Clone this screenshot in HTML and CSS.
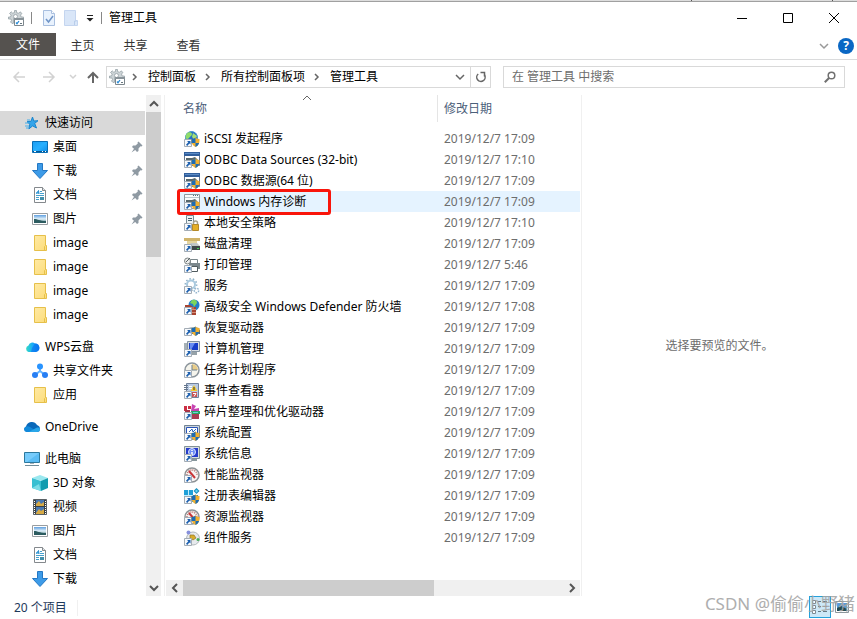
FILE: index.html
```html
<!DOCTYPE html>
<html lang="zh-CN">
<head>
<meta charset="utf-8">
<title>管理工具</title>
<link rel="stylesheet" href="styles.css">
</head>
<body>
<svg class="defs" aria-hidden="true">
  <linearGradient id="g-blue" x1="0" y1="0" x2="1" y2="1"><stop offset="0" stop-color="#1b9df2"/><stop offset=".5" stop-color="#28b0ff"/><stop offset="1" stop-color="#0c8be8"/></linearGradient>
  <linearGradient id="g-sky" x1="0" y1="0" x2="0" y2="1"><stop offset="0" stop-color="#5f9fe0"/><stop offset=".5" stop-color="#e3f2fa"/><stop offset="1" stop-color="#356a70"/></linearGradient>
  <linearGradient id="g-wps" x1="0" y1="0" x2="1" y2="0"><stop offset="0" stop-color="#35dcc4"/><stop offset=".5" stop-color="#19a9f8"/><stop offset="1" stop-color="#0877f2"/></linearGradient>
  <linearGradient id="g-fold" x1="0" y1="0" x2="1" y2="1"><stop offset="0" stop-color="#ffeaa4"/><stop offset="1" stop-color="#fcdc7a"/></linearGradient>
  <symbol id="gear" viewBox="0 0 16 16">
    <path d="M6.500.5h2v2l2 .8L12 1.800 14 3.500 12.500 5l.7 2h2.300v1.500H5.500v4.800L4 13.500 2.500 12l1-1.500L3 9H.5V7h2l.7-2L1.500 3.500 3.200 1.800 4.700 3.200l1.800-.7z" fill="#ccd3d6" stroke="#98a3a8" stroke-width=".8"/>
    <circle cx="7.500" cy="6.500" r="2" fill="#fff" stroke="#a4adb2"/>
    <path d="M6.500 8.500h9v7h-9z" fill="#fff" stroke="#7d878d"/><path d="M6 8h10v2H6z" fill="#899399"/>
    <path d="M8 12.500l1 1.200 2-2.700" fill="none" stroke="#2388d5" stroke-width="1.200"/><path d="M12 13.500h2" stroke="#68777f"/>
  </symbol>
  <symbol id="arrow" viewBox="0 0 16 16"><path d="M.5 8.500h7v7h-7z" fill="#f7f9fb" stroke="#a3acb5"/><path d="M3 10h3.500v3.500L5.400 12.400 3.200 15 2 13.800l2.300-2.500z" fill="#1c5fae"/></symbol>
  <symbol id="shield" viewBox="0 0 16 16"><path d="M7.500 8q2.500 0 4-1.500Q13 8 15.500 8q.5 6-4 8-4.500-2-4-8z" fill="#f0b030"/><path d="M11.500 6.500Q10 8 7.500 8v4h4zM11.500 12h3.600c-.6 2-1.800 3.200-3.600 4z" fill="#1c6cb5"/></symbol>
  <symbol id="star" viewBox="0 0 16 16"><path d="M8.500 2l1.300 4 4.200-.3-3.300 2.700 1.800 4.600-3.900-2.100-3.700 3 .9-4.700L3 6.700l4-.4z" fill="#36a5ea" stroke="#1a86cd"/><path d="M3 5h3M1 8h4M1 11h4M2 13h3" stroke="#48aee9"/></symbol>
  <symbol id="desktop" viewBox="0 0 16 16"><path d="M.5 2.500h15v11H.5z" fill="url(#g-blue)" stroke="#086fb7"/><path d="M1 12.500h14" stroke="#075792"/><path d="M2 12.500h2M10 12.500h1M13 12.500h1" stroke="#fff"/></symbol>
  <symbol id="down" viewBox="0 0 16 16"><path d="M5.500.5h5v7h5L8 15.500.5 7.500h5z" fill="#3d9be8" stroke="#2478c4"/></symbol>
  <symbol id="doc" viewBox="0 0 16 16"><path d="M2.500.5h8l3 3v12h-11z" fill="#fff" stroke="#84898d"/><path d="M10.500.5v3h3" fill="#e1e5e8" stroke="#84898d"/><path d="M8 4.500h2M8 6.500h4M4 8.500h8M4 10.500h3M4 12.500h3" stroke="#45a0cd"/><path d="M4.500 6.500l2-3 .5 3.500M4 6h3" stroke="#1587cd" fill="none"/><path d="M8 10h4v3H8z" fill="#438fab"/></symbol>
  <symbol id="pic" viewBox="0 0 16 16"><path d="M.5 2.500h15v11H.5z" fill="#fff" stroke="#989da1"/><path d="M2 4h12v8H2z" fill="url(#g-sky)"/><path d="M2 8c4 0 5 2 12 2v2H2z" fill="#2c5c60"/></symbol>
  <symbol id="folder" viewBox="0 0 16 16"><path d="M2.500.5h11v10h1v5h-12z" fill="url(#g-fold)" stroke="#e6c04a"/><path d="M12.500 15.500v-4l1-1" fill="none" stroke="#e6c04a"/></symbol>
  <symbol id="wps" viewBox="0 0 16 16"><path d="M4.500 13a3.400 3.400 0 0 1 0-6.500 4 4 0 0 1 6.500-2 4.300 4.300 0 0 1 1 8.500z" fill="url(#g-wps)"/><path d="M8 9l3-4.500a4.300 4.300 0 0 1 1 8.500H7z" fill="#0871ef" opacity=".6"/></symbol>
  <symbol id="share" viewBox="0 0 16 16"><path d="M8 4v5M8 8l-5 4M8 8l5 4" stroke="#62b2ff" stroke-width="2"/><circle cx="8" cy="3.500" r="3" fill="#2994ff"/><circle cx="3" cy="12" r="3" fill="#277ff4"/><circle cx="13" cy="12" r="3" fill="#277ff4"/></symbol>
  <symbol id="onedrive" viewBox="0 0 16 16"><path d="M3 13a3 3 0 0 1-1-5.500A6 6 0 0 1 13 6q3 1 3 4t-3 3z" fill="#0a69ba"/><path d="M3 13q-3 0-3-3c0-2 3-4 6-2l8 5z" fill="#1289da"/><path d="M5 13l7-4c3-1 4 0 4 1.500S15 13 13 13z" fill="#29a7e9"/></symbol>
  <symbol id="pc" viewBox="0 0 16 16"><path d="M.5 1.500h15v10H.5z" fill="#5bbcf4" stroke="#2c789d"/><path d="M1 2h14L3 11H1z" fill="#89d5ff" opacity=".6"/><path d="M6 12h4v1H6z" fill="#a7b2b8"/><path d="M1 14.500h14" stroke="#718c99"/></symbol>
  <symbol id="cube" viewBox="0 0 16 16"><path d="M0 3l8-3 8 3-6 3z" fill="#9be8ef"/><path d="M0 3l9 3v10l-9-3z" fill="#38bfd1"/><path d="M9 6l7-3v10l-7 3z" fill="#139caf"/><path d="M0 13l7-4 2 7z" fill="#7bdce6"/></symbol>
  <symbol id="film" viewBox="0 0 16 16"><path d="M1.500.5h13v15h-13z" fill="#3b4144" stroke="#596064"/><path d="M4 1h8v6H4zM4 8h8v7H4z" fill="#4978b2"/><path d="M4 5l3-3 2 3 3-2v4H4zM4 14l3-4 2 2 3-2v5H4z" fill="#d7aa45"/><path d="M2.500 2v13M13.500 2v13" stroke="#fff" stroke-dasharray="1 1"/></symbol>
  <symbol id="pin" viewBox="0 0 12 12"><path d="M7.500.5l4 4-1 1-1-.3-2 2.300v2.500L6 11 4.200 9 .5 11.500 3 7.800 1 6l1-1.500h2.500l2.300-2-.3-1z" fill="#8f9aa3"/></symbol>
  <symbol id="iscsi" viewBox="0 0 16 16"><circle cx="7.500" cy="6.500" r="6" fill="#2470c4" stroke="#3f8fcc"/><path d="M4 1.500c4-1 5 2 3 3.500S5 8 3 8 1 3 4 1.500z" fill="#8fdc6b"/><path d="M9 2l4 3-2 4-3-3z" fill="#a5df75"/><use href="#arrow"/><use href="#shield"/></symbol>
  <symbol id="odbc" viewBox="0 0 16 16"><path d="M.5.500h15v13H.5z" fill="#fff" stroke="#65758b"/><path d="M0 0h16v4H0z" fill="#315f9c"/><path d="M1 1h14v1H1z" fill="#5c8cc6"/><path d="M2 6h6l3-1 4 4-2 2-4-3-3 1-4-1z" fill="#56676c"/><use href="#arrow"/><use href="#shield"/></symbol>
  <symbol id="memory" viewBox="0 0 16 16"><path d="M.5.500h15v14H.5z" fill="#f8fafb" stroke="#8b979e"/><path d="M1 3.500h14" stroke="#b7c5cd"/><path d="M9 1.500h5" stroke="#52717f" stroke-dasharray="1 1"/><path d="M2 6h6l3-1 4 4-2 2-4-3-3 1-4-1z" fill="#56676c"/><use href="#arrow"/><use href="#shield"/></symbol>
  <symbol id="policy" viewBox="0 0 16 16"><path d="M2.500.5h7v13h-7z" fill="#eef3f5" stroke="#778c96"/><path d="M4 3.500h4M4 5.500h4" stroke="#46646f"/><path d="M9.500 10V8a2 2 0 0 1 4 0v2" fill="none" stroke="#a6a18b" stroke-width="1.500"/><path d="M8.500 9.500h6v6h-6z" fill="#e4ae27" stroke="#b48a2b"/><use href="#arrow"/></symbol>
  <symbol id="disk" viewBox="0 0 16 16"><path d="M0 2h16v3H0z" fill="#d0b46b"/><path d="M3 5h10v3H3z" fill="#e5d49e"/><path d="M5 9l2-2h6l3 3v4H5z" fill="#c1c6c6"/><path d="M6 10h10v4H6z" fill="#3f4849"/><path d="M13 12.500h2" stroke="#46d554"/><use href="#arrow"/></symbol>
  <symbol id="print" viewBox="0 0 16 16"><path d="M6.500 2.500h7v4h-7z" fill="#fff" stroke="#7a878b"/><path d="M5 6h11v6H5z" fill="#7b878c"/><path d="M7.500 9.500h6v5h-6z" fill="#fff" stroke="#505b5e"/><circle cx="3.500" cy="4" r="3" fill="#ededeb" stroke="#7d8484"/><path d="M2 5l4-4" stroke="#596466"/><use href="#arrow"/></symbol>
  <symbol id="service" viewBox="0 0 16 16"><circle cx="7" cy="6.500" r="4" fill="none" stroke="#a9c9de" stroke-width="2"/><circle cx="7" cy="6.500" r="5.700" fill="none" stroke="#8fb2c9" stroke-width="1.500" stroke-dasharray="1.500 2"/><circle cx="12.500" cy="12.500" r="2.200" fill="none" stroke="#94b5ce" stroke-width="1.500" stroke-dasharray="1.500 1"/><use href="#arrow"/></symbol>
  <symbol id="firewall" viewBox="0 0 16 16"><circle cx="10" cy="6" r="5.500" fill="#247cc9"/><path d="M8 1q5-1 5 3l-3 4-1-3-3-1z" fill="#7cd45c"/><path d="M1 6h5l3 2h3v8H6V9L1 8z" fill="#a74532"/><path d="M6 10.500h6M6 13.500h6M9 8v3" stroke="#d68d77"/><use href="#arrow"/></symbol>
  <symbol id="recovery" viewBox="0 0 16 16"><path d="M4 8l3-1h6l3 2v5H4z" fill="#b7c4cb"/><path d="M5 10h11v4H5z" fill="#536674"/><use href="#arrow"/><use href="#shield"/></symbol>
  <symbol id="computer" viewBox="0 0 16 16"><path d="M0 2h4v9H0z" fill="#a6b1b7"/><path d="M3.500.5h12v10h-12z" fill="#d9dfe4" stroke="#8594a2"/><path d="M5 2h9v7H5z" fill="#183ec9"/><path d="M6 2h5L7 9H6z" fill="#688df1"/><path d="M8 11h5v3H8z" fill="#96a2a8"/><use href="#arrow"/></symbol>
  <symbol id="clock" viewBox="0 0 16 16"><circle cx="8" cy="8" r="7" fill="#f5f4ec" stroke="#8c959c" stroke-width="1.500"/><path d="M8 2a6 6 0 0 1 6 6H8z" fill="#e8cc88"/><path d="M8 3v5h5" fill="none" stroke="#6e8190"/><use href="#arrow"/></symbol>
  <symbol id="event" viewBox="0 0 16 16"><path d="M2.500.5h12v14h-12z" fill="#b9cbe4" stroke="#71829c"/><path d="M0 2.500h4M0 4.500h4M0 6.500h4" stroke="#64758b"/><path d="M5 3.500h3M5 5.500h3" stroke="#fff"/><path d="M10 2l3.500 6h-7z" fill="#f4ca32"/><path d="M10 4v3" stroke="#333"/><path d="M8 9h5v5H8z" fill="#c95354"/><path d="M9 10.500h3l-2 3" stroke="#fff" fill="none"/><use href="#arrow"/></symbol>
  <symbol id="defrag" viewBox="0 0 16 16"><path d="M0 2h3v5H0zM4 2h3v3H4z" fill="#cb3044"/><path d="M8 0l4 2-2 3 5-1v3H7z" fill="#c743b2"/><path d="M7 7h9v3H7z" fill="#2aa765"/><path d="M7 10h8v5H7z" fill="#a93b52"/><path d="M9 8.500h5" stroke="#66d3dd"/><path d="M1 6h5v2H1z" fill="#a93546"/><use href="#arrow"/></symbol>
  <symbol id="config" viewBox="0 0 16 16"><path d="M.5.500h15v12H.5z" fill="#cdd5dc" stroke="#718394"/><path d="M2.500 2.500h11v8h-11z" fill="#fff" stroke="#2853b8"/><path d="M5 7l3-3 1 3 3-3" fill="none" stroke="#2767bc"/><path d="M8 13h4v2H8z" fill="#87969c"/><use href="#arrow"/><use href="#shield"/></symbol>
  <symbol id="info" viewBox="0 0 16 16"><path d="M.5.500h15v12H.5z" fill="#d8dedf" stroke="#829297"/><path d="M2 2h12v9H2z" fill="#253bcb"/><circle cx="8" cy="6" r="3.500" fill="#6c8cf5" stroke="#dce6ff"/><path d="M8 4v1M8 6v3" stroke="#fff" stroke-width="1.500"/><path d="M8 13h5v2H8z" fill="#87969c"/><use href="#arrow"/></symbol>
  <symbol id="gauge" viewBox="0 0 16 16"><circle cx="8" cy="8" r="7" fill="#f7f3f2" stroke="#8d9295" stroke-width="1.500"/><path d="M3 8a5 5 0 0 1 10 0" fill="none" stroke="#b67671" stroke-width="1.500" stroke-dasharray="1 1"/><path d="M5 4l6 7" stroke="#c83538" stroke-width="2"/><use href="#arrow"/></symbol>
  <symbol id="resource" viewBox="0 0 16 16"><use href="#gauge"/><use href="#shield"/></symbol>
  <symbol id="registry" viewBox="0 0 16 16"><path d="M0 2h9v12H0z" fill="#1fa0d8"/><path d="M4.500 2v10M0 7.500h10" stroke="#c2efff"/><path d="M9 7h5v5H9z" fill="#1789bd"/><path d="M12.500 0L15.500 3 12.500 6 9.500 3z" fill="#178fbf"/><path d="M12.500 1.500L14 3 12.500 4.500 11 3z" fill="#67d5f6"/><use href="#arrow"/><use href="#shield"/></symbol>
  <symbol id="component" viewBox="0 0 16 16"><ellipse cx="9" cy="8.500" rx="6.500" ry="6.500" fill="#e7eaed" stroke="#b0b7bb"/><circle cx="4.500" cy="2.500" r="2" fill="#8790dc"/><path d="M6 5h4l2 3-3 2-3-2z" fill="#d7ad2c" stroke="#94762c" stroke-width=".7"/><circle cx="14" cy="9.500" r="1.500" fill="#45ac59"/><use href="#arrow"/></symbol>
  <symbol id="chev" viewBox="0 0 10 10"><path d="M3 2l3 3-3 3" fill="none" stroke="currentColor" stroke-width="1.500"/></symbol>
  <symbol id="chev-down" viewBox="0 0 10 10"><path d="M1 3l4 4 4-4" fill="none" stroke="currentColor" stroke-width="1.500"/></symbol>
</svg>

<div class="backdrop"><i></i><i></i></div>
<header class="titlebar">
  <svg class="ico"><use href="#gear"/></svg><i class="sep"></i>
  <button class="quick" aria-label="属性"><svg viewBox="0 0 14 16"><path d="M1.500.5h8l3 3v12h-11z" fill="#e9f2fd" stroke="#a9bfdf"/><path d="M9.500.5v3h3" fill="#fff" stroke="#a9bfdf"/><path d="M4 9l2.500 3L11 6" fill="none" stroke="#6f94c7" stroke-width="1.500"/></svg></button>
  <button class="quick" aria-label="新建文件夹"><svg viewBox="0 0 14 16"><path d="M.5.500h11v10h2v5H.5z" fill="#d9e6f8" stroke="#c4d5ef"/><path d="M10.500 15v-4h2" fill="none" stroke="#b8cdea"/></svg></button>
  <button class="custom" aria-label="自定义快速访问工具栏"><svg viewBox="0 0 8 8"><path d="M1 1.500h6" stroke="#222"/><path d="M.5 4h7L4 7.500z" fill="#222"/></svg></button>
  <i class="sep"></i><h1>管理工具</h1>
  <div class="window-controls">
    <button aria-label="最小化"><svg viewBox="0 0 12 12"><path d="M1 6.500h10" stroke="#000"/></svg></button>
    <button aria-label="最大化"><svg viewBox="0 0 12 12"><path d="M1.500 1.500h9v9h-9z" fill="none" stroke="#000"/></svg></button>
    <button aria-label="关闭"><svg viewBox="0 0 12 12"><path d="M1 1l10 10M11 1L1 11" stroke="#000"/></svg></button>
  </div>
</header>
<nav class="ribbon">
  <button class="file-tab">文件</button><button>主页</button><button>共享</button><button>查看</button>
  <div class="ribbon-end"><button aria-label="展开功能区"><svg class="small"><use href="#chev-down"/></svg></button><button class="help" aria-label="帮助">?</button></div>
</nav>
<div class="toolbar">
  <div class="history">
    <button class="faint" aria-label="后退"><svg viewBox="0 0 14 12"><path d="M13 6H2M7 1L2 6l5 5" fill="none" stroke="currentColor" stroke-width="1.500"/></svg></button>
    <button class="faint" aria-label="前进"><svg viewBox="0 0 14 12"><path d="M1 6h11M7 1l5 5-5 5" fill="none" stroke="currentColor" stroke-width="1.500"/></svg></button>
    <button class="recent faint" aria-label="最近位置"><svg viewBox="0 0 10 10"><path d="M2 3l3 3 3-3" fill="none" stroke="currentColor" stroke-width="1.500"/></svg></button>
    <button class="up" aria-label="上移"><svg viewBox="0 0 12 12"><path d="M6 12V2M1 7l5-5 5 5" fill="none" stroke="currentColor" stroke-width="2"/></svg></button>
  </div>
  <div class="address">
    <svg class="ico"><use href="#gear"/></svg><svg class="small"><use href="#chev"/></svg><a href="#panel">控制面板</a>
    <svg class="small"><use href="#chev"/></svg><a href="#items">所有控制面板项</a><svg class="small"><use href="#chev"/></svg><a href="#tools">管理工具</a>
    <button class="dropdown" aria-label="以前的位置"><svg class="small"><use href="#chev-down"/></svg></button>
    <button class="refresh" aria-label="刷新"><svg viewBox="0 0 12 12"><path d="M3.200 3A4.200 4.200 0 1 0 9.500 4" fill="none" stroke="currentColor" stroke-width="1.500"/><path d="M5.500 1.500H9.500v4" fill="none" stroke="currentColor" stroke-width="1.500"/></svg></button>
  </div>
  <label class="search"><input type="text" aria-label="搜索" placeholder="在 管理工具 中搜索"><svg viewBox="0 0 12 12"><circle cx="7.500" cy="4.500" r="3.300" fill="none" stroke="#707070" stroke-width="1.500"/><path d="M5 7L.8 11.200" stroke="#707070" stroke-width="2"/></svg></label>
</div>
<main>
  <aside class="sidebar">
    <ul class="tree">
      <li class="top selected"><svg class="ico"><use href="#star"/></svg><a href="#quick">快速访问</a></li>
      <li><svg class="ico"><use href="#desktop"/></svg><a href="#desk">桌面</a><svg class="pin"><use href="#pin"/></svg></li>
      <li><svg class="ico"><use href="#down"/></svg><a href="#downloads">下载</a><svg class="pin"><use href="#pin"/></svg></li>
      <li><svg class="ico"><use href="#doc"/></svg><a href="#docs">文档</a><svg class="pin"><use href="#pin"/></svg></li>
      <li><svg class="ico"><use href="#pic"/></svg><a href="#pics">图片</a><svg class="pin"><use href="#pin"/></svg></li>
      <li><svg class="ico"><use href="#folder"/></svg><a href="#image1">image</a></li>
      <li><svg class="ico"><use href="#folder"/></svg><a href="#image2">image</a></li>
      <li><svg class="ico"><use href="#folder"/></svg><a href="#image3">image</a></li>
      <li><svg class="ico"><use href="#folder"/></svg><a href="#image4">image</a></li>
      <li class="top group"><svg class="ico"><use href="#wps"/></svg><a href="#cloud">WPS云盘</a></li>
      <li><svg class="ico"><use href="#share"/></svg><a href="#shared">共享文件夹</a></li>
      <li><svg class="ico"><use href="#folder"/></svg><a href="#apps">应用</a></li>
      <li class="top group"><svg class="ico"><use href="#onedrive"/></svg><a href="#drive">OneDrive</a></li>
      <li class="top group"><svg class="ico"><use href="#pc"/></svg><a href="#thispc">此电脑</a></li>
      <li><svg class="ico"><use href="#cube"/></svg><a href="#objects">3D 对象</a></li>
      <li><svg class="ico"><use href="#film"/></svg><a href="#videos">视频</a></li>
      <li><svg class="ico"><use href="#pic"/></svg><a href="#pictures">图片</a></li>
      <li><svg class="ico"><use href="#doc"/></svg><a href="#documents">文档</a></li>
      <li><svg class="ico"><use href="#down"/></svg><a href="#download">下载</a></li>
    </ul>
    <div class="vscroll"><button aria-label="向上滚动"><svg viewBox="0 0 10 10"><path d="M1 7l4-4 4 4" fill="none" stroke="currentColor" stroke-width="2"/></svg></button><div class="thumb"></div><button aria-label="向下滚动"><svg viewBox="0 0 10 10"><path d="M1 3l4 4 4-4" fill="none" stroke="currentColor" stroke-width="2"/></svg></button></div>
  </aside>
  <section class="files">
    <table>
      <thead><tr><th class="name">名称<svg class="sort" viewBox="0 0 10 6"><path d="M1 5l4-4 4 4" fill="none" stroke="#666"/></svg></th><th class="date"><span>修改日期</span></th></tr></thead>
      <tbody>
        <tr><td><div><svg class="ico"><use href="#iscsi"/></svg>iSCSI 发起程序</div></td><td>2019/12/7 17:09</td></tr>
        <tr><td><div><svg class="ico"><use href="#odbc"/></svg>ODBC Data Sources (32-bit)</div></td><td>2019/12/7 17:10</td></tr>
        <tr><td><div><svg class="ico"><use href="#odbc"/></svg>ODBC 数据源(64 位)</div></td><td>2019/12/7 17:09</td></tr>
        <tr class="hover"><td><div><svg class="ico"><use href="#memory"/></svg>Windows 内存诊断<i class="highlight"></i></div></td><td>2019/12/7 17:09</td></tr>
        <tr><td><div><svg class="ico"><use href="#policy"/></svg>本地安全策略</div></td><td>2019/12/7 17:10</td></tr>
        <tr><td><div><svg class="ico"><use href="#disk"/></svg>磁盘清理</div></td><td>2019/12/7 17:09</td></tr>
        <tr><td><div><svg class="ico"><use href="#print"/></svg>打印管理</div></td><td>2019/12/7 5:46</td></tr>
        <tr><td><div><svg class="ico"><use href="#service"/></svg>服务</div></td><td>2019/12/7 17:09</td></tr>
        <tr><td><div><svg class="ico"><use href="#firewall"/></svg>高级安全 Windows Defender 防火墙</div></td><td>2019/12/7 17:08</td></tr>
        <tr><td><div><svg class="ico"><use href="#recovery"/></svg>恢复驱动器</div></td><td>2019/12/7 17:09</td></tr>
        <tr><td><div><svg class="ico"><use href="#computer"/></svg>计算机管理</div></td><td>2019/12/7 17:09</td></tr>
        <tr><td><div><svg class="ico"><use href="#clock"/></svg>任务计划程序</div></td><td>2019/12/7 17:09</td></tr>
        <tr><td><div><svg class="ico"><use href="#event"/></svg>事件查看器</div></td><td>2019/12/7 17:09</td></tr>
        <tr><td><div><svg class="ico"><use href="#defrag"/></svg>碎片整理和优化驱动器</div></td><td>2019/12/7 17:09</td></tr>
        <tr><td><div><svg class="ico"><use href="#config"/></svg>系统配置</div></td><td>2019/12/7 17:09</td></tr>
        <tr><td><div><svg class="ico"><use href="#info"/></svg>系统信息</div></td><td>2019/12/7 17:09</td></tr>
        <tr><td><div><svg class="ico"><use href="#gauge"/></svg>性能监视器</div></td><td>2019/12/7 17:09</td></tr>
        <tr><td><div><svg class="ico"><use href="#registry"/></svg>注册表编辑器</div></td><td>2019/12/7 17:09</td></tr>
        <tr><td><div><svg class="ico"><use href="#resource"/></svg>资源监视器</div></td><td>2019/12/7 17:09</td></tr>
        <tr><td><div><svg class="ico"><use href="#component"/></svg>组件服务</div></td><td>2019/12/7 17:09</td></tr>
      </tbody>
    </table>
    <div class="hscroll"><button aria-label="向左滚动"><svg viewBox="0 0 10 10"><path d="M7 1L3 5l4 4" fill="none" stroke="currentColor" stroke-width="2"/></svg></button><div class="track"><div class="thumb"></div></div><button aria-label="向右滚动"><svg viewBox="0 0 10 10"><path d="M3 1l4 4-4 4" fill="none" stroke="currentColor" stroke-width="2"/></svg></button></div>
  </section>
  <section class="preview"><p>选择要预览的文件。</p></section>
</main>
<footer class="status">
  <span class="count">20 个项目</span>
  <div class="views">
    <button class="active" aria-label="详细信息"><svg viewBox="0 0 16 14"><path d="M.5.500h3v3h-3zM.5 5.500h3v3h-3zM.5 10.500h3v3h-3z" fill="#fff" stroke="#7d8b93"/><path d="M6 1.500h3M11 1.500h4M6 6.500h3M11 6.500h4M6 11.500h3M11 11.500h4" stroke="#647984"/></svg></button>
    <button aria-label="大图标"><svg viewBox="0 0 16 14"><path d="M1.500 1.500h13v11h-13z" fill="#fff" stroke="#8c969b"/><path d="M3 3h10v8H3z" fill="#559bdd"/><path d="M3 8l4-2 6 3v2H3z" fill="#234b51"/></svg></button>
  </div>
  <span class="watermark">CSDN @偷偷小野猪</span>
</footer>
</body>
</html>
```
FILE: styles.css
```css
* { box-sizing: border-box; }
body {
  margin: 0;
  height: 100vh;
  display: flex;
  flex-direction: column;
  overflow: hidden;
  background: #fff;
  color: #000;
  font: 12px/16px "Noto Sans", "Noto Sans CJK SC", sans-serif;
}
button { margin: 0; padding: 0; border: 0; background: none; color: inherit; font: inherit; display: flex; align-items: center; justify-content: center; }
a { color: inherit; text-decoration: none; }
svg { display: block; flex: none; }
.defs { position: absolute; width: 0; height: 0; }
.ico { width: 16px; height: 16px; }
.small { width: 10px; height: 10px; }

.backdrop { flex: none; height: 2px; display: flex; justify-content: flex-end; gap: 140px; padding-right: 24px; background: #ddd; border-bottom: 1px solid #a0a0a0; }
.backdrop i { width: 1px; background: #555; }

.titlebar { flex: none; height: 31px; display: flex; align-items: center; padding-left: 8px; }
.titlebar .sep { width: 1px; height: 12px; margin: 0 10px 0 7px; background: #888; }
.quick { margin-right: 8px; }
.quick svg { width: 14px; height: 16px; }
.custom svg { width: 8px; height: 8px; }
.custom + .sep { margin-right: 7px; }
h1 { margin: 0; font-size: 12px; font-weight: 400; }
.window-controls { display: flex; margin-left: auto; align-self: stretch; }
.window-controls button { width: 46px; }
.window-controls svg { width: 12px; height: 12px; }

.ribbon { flex: none; height: 27px; display: flex; align-items: flex-start; border-bottom: 1px solid #dadbdc; color: #333; }
.ribbon > button { width: 53px; height: 26px; }
.ribbon > .file-tab { width: 56px; height: 23px; background: #55524f; color: #fff; }
.ribbon-end { display: flex; align-items: center; gap: 9px; margin: 5px 3px 0 auto; color: #999; }
.help { width: 16px; height: 16px; border-radius: 50%; background: #0a67c4; color: #fff; font-weight: 700; }

.toolbar { flex: none; height: 35px; display: flex; align-items: flex-start; padding: 6px 12px 0 0; }
.history { flex: none; width: 106px; height: 22px; display: flex; align-items: center; padding-left: 12px; color: #666; }
.history svg { width: 14px; height: 12px; }
.history button { margin-right: 16px; }
.history .faint { color: #d2d2d2; }
.history .recent { margin: 0 9px 0 -4px; }
.history .recent svg { width: 10px; height: 10px; }
.history .up { margin: 0; }
.history .up svg { width: 12px; }
.address { flex: 381 1 0; height: 22px; display: flex; align-items: center; border: 1px solid #d9d9d9; padding-left: 2px; color: #666; }
.address a { color: #000; }
.address .small { margin: 0 8px 0 5px; }
.address a + .small { margin: 0 8px 0 7px; }
.dropdown { margin-left: auto; }
.address .dropdown .small { margin: 0 5px 0 0; }
.refresh { width: 20px; align-self: stretch; border-left: 1px solid #d9d9d9; }
.refresh svg { width: 12px; height: 12px; }
.search { flex: 324 1 0; height: 22px; margin-left: 12px; display: flex; align-items: center; border: 1px solid #d9d9d9; padding: 0 8px 0 8px; }
.search input { flex: 1; min-width: 0; border: 0; outline: 0; padding: 0; font: inherit; background: none; }
.search input::placeholder { color: #6d6d6d; opacity: 1; }
.search svg { width: 12px; height: 12px; }

main { flex: 1; min-height: 0; display: flex; }
.sidebar { flex: none; width: 165px; display: flex; padding-right: 3px; border-right: 1px solid #f0f0f0; }
.tree { flex: 1; list-style: none; margin: 0 1px 0 0; padding: 16px 0 0; overflow: hidden; }
.tree li { height: 24px; display: flex; align-items: center; gap: 5px; padding: 0 2px 0 32px; white-space: nowrap; }
.tree .top { padding-left: 24px; }
.tree .selected { background: #d9d9d9; }
.tree .group { margin-top: 8px; }
.pin { width: 12px; height: 12px; margin-left: auto; }
.vscroll { flex: none; width: 15px; display: flex; flex-direction: column; background: #f0f0f0; color: #555; }
.vscroll button { height: 17px; }
.vscroll svg, .hscroll svg { width: 10px; height: 10px; }
.vscroll .thumb { height: 29%; margin-bottom: auto; background: #cdcdcd; }

.files { flex: 416 1 0; min-width: 0; display: flex; flex-direction: column; border-right: 1px solid #f0f0f0; padding: 0 1px; }
table { margin-left: 14px; table-layout: fixed; border-collapse: collapse; }
th { height: 33px; padding: 0; font-weight: 400; text-align: left; vertical-align: top; color: #4c607a; }
th.name { position: relative; padding: 6px 0 0 3px; width: 257px; }
.sort { position: absolute; left: 122px; top: 0; width: 10px; height: 6px; }
th span { display: block; height: 27px; padding: 6px 0 0 6px; border-left: 1px solid #e5e5e5; }
td { height: 21px; padding: 0 0 0 7px; color: #6d6d6d; }
td:first-child { padding-left: 4px; color: #000; }
td div { position: relative; display: flex; align-items: center; gap: 4px; white-space: nowrap; }
.hover td { background: #e5f3ff; }
.highlight { position: absolute; left: -7px; top: -5px; width: 154px; height: 26px; border: 3px solid #f9150b; border-radius: 3px; }
.hscroll { flex: none; height: 16px; display: flex; margin-top: auto; background: #f0f0f0; color: #555; }
.hscroll button { width: 17px; }
.track { flex: 1; display: flex; }
.hscroll .thumb { width: 66%; background: #cdcdcd; }

.preview { flex: 276 1 0; display: flex; align-items: center; justify-content: center; color: #6d6d6d; }
.preview p { margin: 0; }

.status { flex: none; height: 23px; position: relative; display: flex; align-items: stretch; justify-content: space-between; padding: 0 4px 0 14px; color: #1e395b; }
.count { align-self: center; padding-right: 10px; border-right: 1px solid #f0f0f0; }
.views { display: flex; }
.views button { width: 22px; height: 22px; border: 1px solid transparent; }
.views .active { background: #cce8f7; border-color: #26a0da; }
.views svg { width: 16px; height: 14px; }
.watermark { position: absolute; right: 2px; top: -3px; font-size: 17px; line-height: 22px; color: #a6a6a6; opacity: .9; white-space: nowrap; }
```
